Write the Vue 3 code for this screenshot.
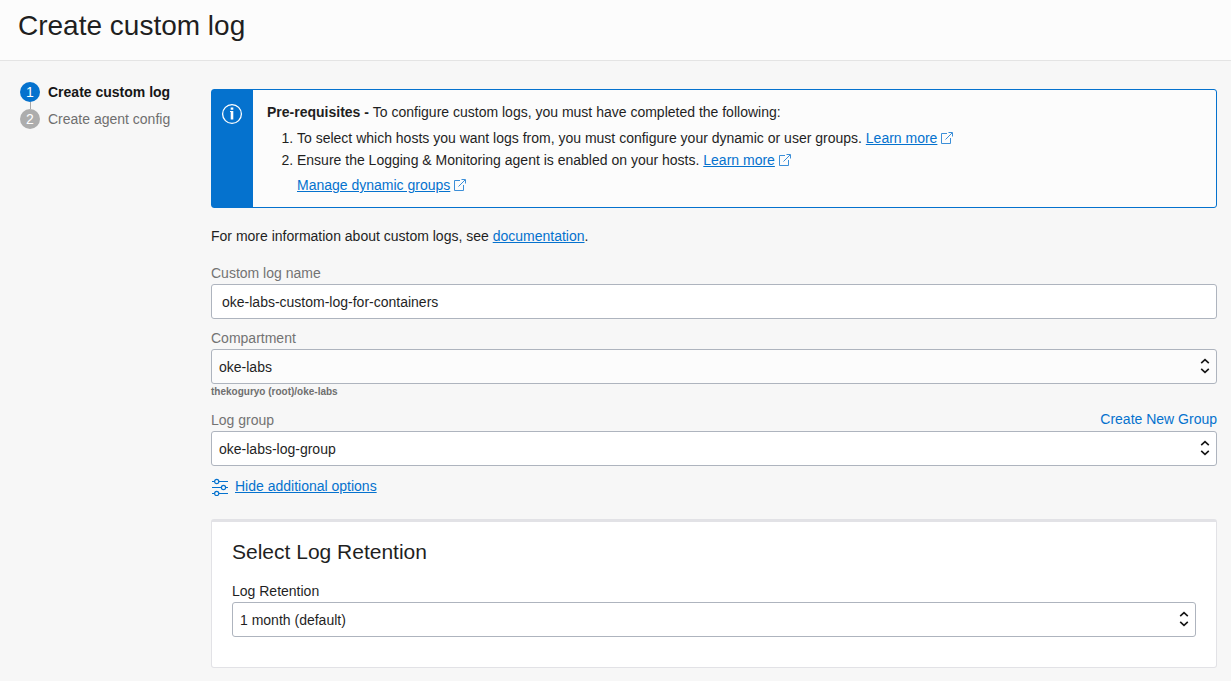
<script setup>
import { ref } from 'vue'

const steps = [
  { number: 1, label: 'Create custom log', active: true },
  { number: 2, label: 'Create agent config', active: false },
]

const logName = ref('oke-labs-custom-log-for-containers')
const compartment = ref('oke-labs')
const logGroup = ref('oke-labs-log-group')
const retention = ref('1 month (default)')
</script>

<template>
  <div class="page">
    <header class="page-header">
      <h1>Create custom log</h1>
    </header>
    <div class="body">
      <nav class="sidebar" aria-label="Steps">
        <ol class="steps">
          <li v-for="step in steps" :key="step.number" class="step" :class="{ active: step.active }">
            <span class="step-number">{{ step.number }}</span>
            <span>{{ step.label }}</span>
          </li>
        </ol>
      </nav>

      <main class="content">
        <section class="alert">
          <div class="alert-side">
            <svg width="22" height="22" viewBox="0 0 22 22" fill="none" aria-hidden="true">
              <circle cx="11" cy="11" r="9.4" stroke="#fff" stroke-width="1.3" />
              <path d="M11 4.500v2.300M11 8v8.500" stroke="#fff" stroke-width="2.600" />
              <path d="M9 8.500h2" stroke="#fff" stroke-width="1" />
            </svg>
          </div>
          <div class="alert-body">
            <p><strong>Pre-requisites - </strong>To configure custom logs, you must have completed the following:</p>
            <ol class="requirements">
              <li>
                To select which hosts you want logs from, you must configure your dynamic or user groups.
                <a href="#">Learn more</a>
                <svg class="external" viewBox="0 0 12 12" aria-hidden="true"><path d="M6 1.5H.5v10h9V6M4.500 7.500l6.500-6.500M7.500.5h4V4.500" /></svg>
              </li>
              <li>
                Ensure the Logging &amp; Monitoring agent is enabled on your hosts.
                <a href="#">Learn more</a>
                <svg class="external" viewBox="0 0 12 12" aria-hidden="true"><path d="M6 1.5H.5v10h9V6M4.500 7.500l6.500-6.500M7.500.5h4V4.500" /></svg>
              </li>
            </ol>
            <p class="manage">
              <a href="#">Manage dynamic groups</a>
              <svg class="external" viewBox="0 0 12 12" aria-hidden="true"><path d="M6 1.5H.5v10h9V6M4.500 7.500l6.500-6.500M7.500.5h4V4.500" /></svg>
            </p>
          </div>
        </section>

        <p class="more-info">For more information about custom logs, see <a href="#">documentation</a>.</p>

        <div class="field">
          <label for="log-name">Custom log name</label>
          <input id="log-name" v-model="logName" class="control text-box" type="text" />
        </div>

        <div class="field">
          <label for="compartment">Compartment</label>
          <div class="select-wrap">
            <select id="compartment" v-model="compartment" class="control muted">
              <option>oke-labs</option>
            </select>
            <svg class="arrows" viewBox="0 0 10 16" aria-hidden="true"><path d="M1.2 5.2 5 1.6l3.8 3.6M1.2 10.8 5 14.4l3.8-3.6" /></svg>
          </div>
          <p class="hint">thekoguryo (root)/oke-labs</p>
        </div>

        <div class="field">
          <div class="label-row">
            <label for="log-group">Log group</label>
            <a class="plain" href="#">Create New Group</a>
          </div>
          <div class="select-wrap">
            <select id="log-group" v-model="logGroup" class="control">
              <option>oke-labs-log-group</option>
            </select>
            <svg class="arrows" viewBox="0 0 10 16" aria-hidden="true"><path d="M1.2 5.2 5 1.6l3.8 3.6M1.2 10.8 5 14.4l3.8-3.6" /></svg>
          </div>
        </div>

        <div class="options-toggle">
          <svg width="18" height="20" viewBox="0 0 18 20" fill="none" stroke="#0572ce" stroke-width="1.2" aria-hidden="true">
            <path d="M1 5.500h2.600M7.800 5.500H17M1 11.500h9.400M14.600 11.500H17M1 17.500h2.600M7.800 17.500H17" />
            <circle cx="5.7" cy="5.500" r="2.1" />
            <circle cx="12.500" cy="11.500" r="2.1" />
            <circle cx="5.7" cy="17.500" r="2.1" />
          </svg>
          <a href="#">Hide additional options</a>
        </div>

        <section class="card">
          <h2>Select Log Retention</h2>
          <label class="dark" for="retention">Log Retention</label>
          <div class="select-wrap">
            <select id="retention" v-model="retention" class="control">
              <option>1 month (default)</option>
            </select>
            <svg class="arrows" viewBox="0 0 10 16" aria-hidden="true"><path d="M1.2 5.2 5 1.6l3.8 3.6M1.2 10.8 5 14.4l3.8-3.6" /></svg>
          </div>
        </section>
      </main>
    </div>
  </div>
</template>

<style>
body {
  margin: 0;
  background: #f7f7f7;
}
</style>

<style scoped>
.page {
  min-height: 100vh;
  box-sizing: border-box;
  background: #f7f7f7;
  color: #1f1f1f;
  font-family: "Liberation Sans", Arial, sans-serif;
  font-size: 14px;
  line-height: 20px;
}

h1, h2, p, ol {
  margin: 0;
  font-weight: 400;
}

.page-header {
  padding: 9px 18px 17px;
  background: #fcfcfc;
  border-bottom: 1px solid #e4e4e4;
}

h1 {
  font-size: 28px;
  line-height: 34px;
}

.body {
  display: flex;
  padding: 0 14px 13px 20px;
}

.sidebar {
  flex: 0 0 191px;
  padding-top: 21px;
}

.steps {
  display: flex;
  flex-direction: column;
  gap: 7px;
  padding: 0;
  list-style: none;
}

.step {
  position: relative;
  display: flex;
  gap: 8px;
  color: #6f6f6f;
}

.step + .step::before {
  content: "";
  position: absolute;
  left: 10px;
  top: -7px;
  width: 1px;
  height: 7px;
  background: #a8a8a8;
}

.step.active {
  color: #161616;
  font-weight: 700;
}

.step-number {
  width: 20px;
  height: 20px;
  border-radius: 50%;
  background: #adadad;
  color: #fff;
  text-align: center;
  font-weight: 400;
}

.active .step-number {
  background: #0572ce;
}

.content {
  flex: 1;
  min-width: 0;
  padding-top: 28px;
}

a {
  color: #0572ce;
  text-decoration: underline;
}

a.plain {
  text-decoration: none;
}

.alert {
  display: flex;
  border: 1px solid #0572ce;
  border-radius: 3px;
  background: #fcfcfc;
}

.alert-side {
  flex: 0 0 41px;
  box-sizing: border-box;
  padding: 13px 0 0 9px;
  background: #0572ce;
}

.alert-body {
  padding: 12px 14px;
}

.requirements {
  padding: 5px 0 4px 30px;
  line-height: 22px;
}

.manage {
  padding-left: 30px;
}

.external {
  width: 12px;
  height: 12px;
  margin-left: 4px;
  vertical-align: -1px;
  fill: none;
  stroke: #3c8fd8;
  stroke-width: 1;
}

.more-info {
  margin-top: 18px;
  margin-bottom: 18px;
}

.field {
  margin-bottom: 10px;
}

label {
  display: block;
  margin-bottom: 2px;
  color: #737373;
  line-height: 18px;
}

label.dark {
  color: #1f1f1f;
}

.label-row {
  display: flex;
  justify-content: space-between;
  line-height: 16px;
}

.control {
  display: block;
  width: 100%;
  height: 35px;
  box-sizing: border-box;
  margin: 0;
  padding: 0 30px 0 7px;
  border: 1px solid #aeb4be;
  border-radius: 3px;
  background: #fff;
  color: #1f1f1f;
  font: inherit;
  appearance: none;
}

.control.text-box {
  padding: 0 10px;
}

.control.muted {
  background: #fcfcfc;
}

.select-wrap {
  position: relative;
}

.arrows {
  position: absolute;
  right: 7px;
  top: 9px;
  width: 10px;
  height: 16px;
  fill: none;
  stroke: #161616;
  stroke-width: 1.6;
  pointer-events: none;
}

.hint {
  margin-bottom: 11px;
  color: #6f6f6f;
  font-size: 10px;
  font-weight: 700;
  line-height: 16px;
}

.options-toggle {
  display: flex;
  align-items: center;
  gap: 6px;
}

.card {
  margin-top: 23px;
  padding: 16px 20px 30px;
  border: 1px solid #e2e2e6;
  border-top-width: 3px;
  border-radius: 3px;
  background: #fff;
}

h2 {
  margin-bottom: 16px;
  font-size: 21px;
  line-height: 28px;
}
</style>
